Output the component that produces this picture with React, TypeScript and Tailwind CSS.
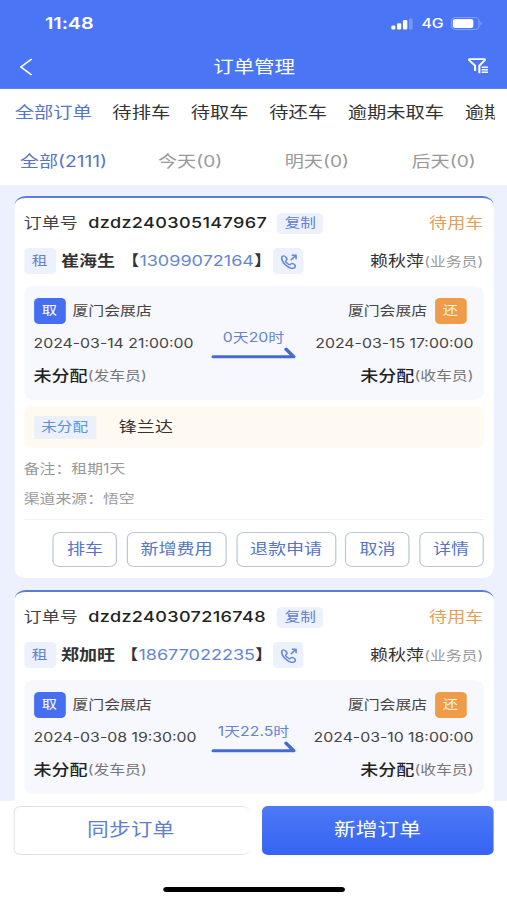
const orders = [
  {
    no: "dzdz240305147967",
    name: "崔海生",
    phone: "13099072164",
    duration: "0天20时",
    start: "2024-03-14 21:00:00",
    end: "2024-03-15 17:00:00",
    car: "锋兰达",
    notes: ["备注：租期1天", "渠道来源：悟空"],
  },
  {
    no: "dzdz240307216748",
    name: "郑加旺",
    phone: "18677022235",
    duration: "1天22.5时",
    start: "2024-03-08 19:30:00",
    end: "2024-03-10 18:00:00",
  },
];

const tabs = ["全部订单", "待排车", "待取车", "待还车", "逾期未取车", "逾期"];
const days = ["全部(2111)", "今天(0)", "明天(0)", "后天(0)"];
const actions = ["排车", "新增费用", "退款申请", "取消", "详情"];

function StatusBar() {
  return (
    <div className="flex h-[46px] items-center justify-between pt-px pr-[20px] pl-[37px]">
      <span className="text-[16.3px] font-semibold tracking-[-0.1px]">11:48</span>
      <div className="flex items-center">
        <svg className="h-[12px] w-[18px]" viewBox="0 0 18 12" fill="currentColor">
          <rect x="0" y="7.5" width="3.4" height="4" rx="1" />
          <rect x="4.8" y="5.3" width="3.4" height="6.2" rx="1" />
          <rect x="9.6" y="2" width="3.6" height="9.5" rx="1" />
          <rect x="14.6" y="0.5" width="3" height="11" rx="1" opacity="0.25" />
        </svg>
        <span className="ml-[7px] pt-px text-[13px] font-medium">4G</span>
        <svg className="ml-[6px] h-[13px] w-[26px]" viewBox="0 0 26 13" fill="none">
          <rect x="0.5" y="0.5" width="22.5" height="12" rx="3.5" stroke="currentColor" opacity="0.3" />
          <rect x="1.6" y="2" width="16.8" height="9" rx="2" fill="currentColor" />
          <path d="M24.3 4.5c1.3.5 1.3 3.5 0 4z" fill="currentColor" opacity="0.4" />
        </svg>
      </div>
    </div>
  );
}

function Header() {
  return (
    <div className="h-[89px] shrink-0 border-b border-[#6484dc] bg-[#4a76f6] text-white">
      <StatusBar />
      <div className="flex h-[42px] items-center justify-between pr-[15px] pl-[16px]">
        <svg className="h-[18px] w-[11px]" viewBox="0 0 11 18" fill="none" stroke="currentColor" strokeWidth="1.6">
          <path d="M10 1 1.2 9 10 17" />
        </svg>
        <span className="ml-[6px] pt-[2px] text-[16.8px]">订单管理</span>
        <svg className="mb-[3px] h-[16px] w-[17px]" viewBox="0 0 17 16" fill="none" stroke="currentColor" strokeWidth="1.7">
          <path d="M5.8 13V7.6L1 2.2V1.2h12.8v1L9.3 7.6v7.6" strokeLinejoin="round" />
          <path d="M11.2 9.2h5.2M11.2 11.7h5.2M11.2 14.2h5.2" strokeWidth="1.4" />
        </svg>
      </div>
    </div>
  );
}

function Arrow() {
  return (
    <svg className="h-[12px] w-[70px]" viewBox="0 0 70 12" fill="none" stroke="#456ad8" strokeWidth="3" strokeLinecap="round">
      <path d="M2 9.8H68L61.8 2.2" strokeLinejoin="round" />
    </svg>
  );
}

function PhoneIcon() {
  return (
    <svg className="h-[15px] w-[13.5px]" viewBox="0 0 24 24" preserveAspectRatio="none" fill="none" stroke="#6488d8" strokeWidth="2.3" strokeLinecap="round" strokeLinejoin="round">
      <path d="M17.5 2H23v5.5M22.5 2.5 16 9" />
      <path d="M2 6.5C2 4.500 3.500 3 5 3c1.600 0 4.800 3.800 4.800 5.200 0 1.500-2 2-2 3.300 0 1.600 4.200 5.700 5.900 5.700 1.300 0 1.800-2.200 3.300-2.200 1.600 0 5 2.600 5 4.200 0 1.800-2 3.800-4.500 3.800C11 23 2 13.500 2 6.500z" />
    </svg>
  );
}

function OrderCard({ order }: { order: (typeof orders)[number] }) {
  return (
    <div className="h-[382px] shrink-0 rounded-[9px] border-t-2 border-[#5b7dd4] bg-white px-[8px] pt-[6px]">
      <div className="flex h-[38px] items-center text-[14.8px]">
        <span className="text-[#444]">订单号</span>
        <span className="ml-[8.5px] w-[147px] font-medium tracking-[0.3px] text-[#222]">{order.no}</span>
        <span className="ml-[8px] flex h-[21px] w-[38px] items-center justify-center rounded-[4px] bg-[#edf1fd] text-[12.8px] text-[#5f80d2]">复制</span>
        <span className="ml-auto text-[#e3a05a]">待用车</span>
      </div>
      <div className="flex h-[38px] items-center text-[14.8px]">
        <span className="flex h-[26px] w-[26px] items-center justify-center rounded-[4px] bg-[#edf1fd] text-[12.8px] text-[#5f80d2]">租</span>
        <span className="ml-[4.5px] font-bold text-[#333]">{order.name}</span>
        <span className="ml-[5px] flex w-[124px] items-center justify-center font-medium text-[#333]">
          【<span className="font-normal text-[#6585cf]">{order.phone}</span>】
        </span>
        <span className="ml-[1px] flex h-[26px] w-[25px] items-center justify-center rounded-[4px] bg-[#edf1fd]">
          <PhoneIcon />
        </span>
        <span className="ml-auto text-[#333]">
          赖秋萍<span className="text-[13px] text-[#999]">(业务员)</span>
        </span>
      </div>
      <div className="mt-[6px] grid h-[114px] grid-cols-[1fr_70px_1fr] rounded-[8px] bg-[#f7f8fd] px-[8px] pt-[8px] text-[13px] whitespace-nowrap text-[#444]">
        <div>
          <div className="flex h-[34px] items-center">
            <span className="mr-[6px] flex h-[26px] w-[26px] items-center justify-center rounded-[4px] bg-[#456ff0] text-[12.5px] text-white">取</span>
            厦门会展店
          </div>
          <div className="flex h-[31px] items-center">{order.start}</div>
          <div className="flex h-[34px] items-center">
            <span className="text-[14.8px] font-medium text-[#222]">未分配</span>
            <span className="text-[#777]">(发车员)</span>
          </div>
        </div>
        <div className="flex flex-col items-center pt-[33px] text-[#6585cf]">
          <span className="leading-[20px]">{order.duration}</span>
          <Arrow />
        </div>
        <div className="flex flex-col items-end">
          <div className="flex h-[34px] items-center">
            厦门会展店
            <span className="mr-[6px] ml-[6px] flex h-[26px] w-[26px] items-center justify-center rounded-[4px] bg-[#ee9c4a] text-[12.5px] text-[#fff3e0]">还</span>
          </div>
          <div className="flex h-[31px] items-center">{order.end}</div>
          <div className="flex h-[34px] items-center">
            <span className="text-[14.8px] font-medium text-[#222]">未分配</span>
            <span className="text-[#777]">(收车员)</span>
          </div>
        </div>
      </div>
      {order.notes && (
        <>
          <div className="mt-[6px] flex h-[42px] items-center rounded-[6px] bg-[#fefaf2] px-[8px]">
            <span className="flex h-[23px] w-[51px] items-center justify-center bg-[#ebf0f9] text-[12.8px] text-[#5b93d8]">未分配</span>
            <span className="ml-[19px] text-[14.8px] text-[#333]">{order.car}</span>
          </div>
          <div className="mt-[5px] text-[13px] leading-[30px] text-[#999]">
            {order.notes.map((note) => (
              <div key={note}>{note}</div>
            ))}
          </div>
          <div className="mt-[6px] flex justify-end gap-[7.5px] border-t border-[#f0f1f5] pt-[12px]">
            {actions.map((label) => (
              <button key={label} className="flex h-[35px] items-center rounded-[6px] border border-[#bcc6da] px-[10.6px] text-[14.8px] text-[#5674c8]">
                {label}
              </button>
            ))}
          </div>
        </>
      )}
    </div>
  );
}

export default function App() {
  return (
    <div className="h-[900px] w-[507px] overflow-hidden bg-white">
      <div className="flex h-[900px] w-[416px] origin-left scale-x-[1.21875] flex-col bg-white font-['Inter','Noto_Sans_CJK_SC',sans-serif]">
        <Header />
        <div className="mr-[10px] flex h-[48px] shrink-0 items-center gap-[17px] overflow-hidden pl-[12px] text-[15.8px] whitespace-nowrap text-[#333]">
          {tabs.map((tab, i) => (
            <span key={tab} className={i === 0 ? "text-[#5674c8]" : ""}>
              {tab}
            </span>
          ))}
        </div>
        <div className="grid h-[48px] shrink-0 grid-cols-4 items-center pt-px text-center text-[15.7px] text-[#999]">
          {days.map((day, i) => (
            <span key={day} className={i === 0 ? "text-[#5674c8]" : ""}>
              {day}
            </span>
          ))}
        </div>
        <div className="flex h-[616px] shrink-0 flex-col gap-[12px] overflow-hidden bg-[#edf1fd] px-[11.5px] pt-[11px]">
          {orders.map((order) => (
            <OrderCard key={order.no} order={order} />
          ))}
        </div>
        <div className="flex gap-[10px] pt-[5px] pr-[11px] pl-[11px] text-[17.9px]">
          <button className="h-[49px] flex-1 rounded-[6px] border-[1.5px] border-r-0 border-[#dde1e8] pr-[2px] text-[#5f80d2]">同步订单</button>
          <button className="h-[49px] flex-1 rounded-[5px] bg-linear-to-b from-[#4c79f4] to-[#3763f4] text-white">新增订单</button>
        </div>
        <div className="mx-auto mt-[32px] h-[5px] w-[149px] rounded-full bg-black" />
      </div>
    </div>
  );
}
